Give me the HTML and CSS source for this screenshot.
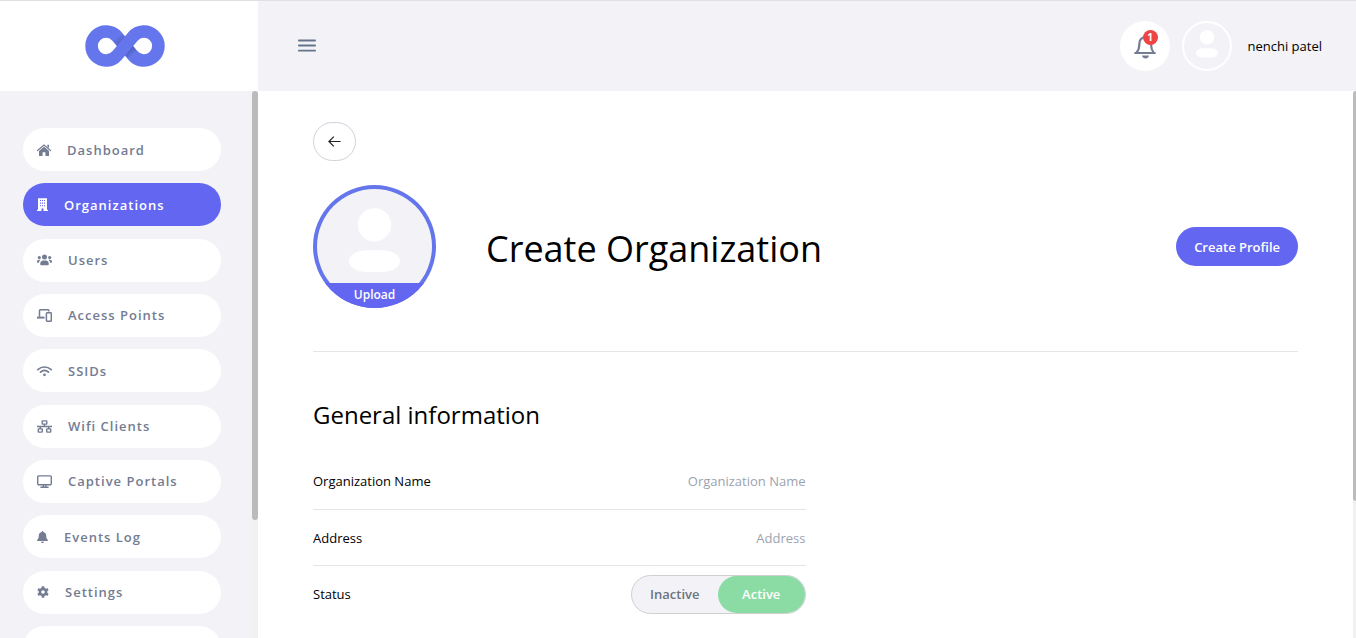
FILE: index.html
```html
<!DOCTYPE html>
<html lang="en">
<head>
<meta charset="utf-8">
<meta name="viewport" content="width=device-width, initial-scale=1">
<title>Create Organization</title>
<link rel="stylesheet" href="styles.css">
</head>
<body>
<div class="app">
  <aside class="sidebar">
    <a class="brand" href="#" aria-label="Home">
      <svg width="80" height="42" viewBox="0 0 80 42" fill="none" stroke="#6576ec" stroke-width="12.6">
        <defs>
          <linearGradient id="fold" gradientUnits="userSpaceOnUse" x1="32" y1="11.6" x2="48" y2="30.4">
            <stop offset="0" stop-color="#6576ec"/><stop offset=".3" stop-color="#5263c8"/><stop offset=".7" stop-color="#4c5cba"/><stop offset="1" stop-color="#6576ec"/>
          </linearGradient>
        </defs>
        <path d="M32.1 30.4A14.5 14.5 0 1 1 32.1 11.6"/>
        <path d="M47.9 11.6A14.5 14.5 0 1 1 47.9 30.4"/>
        <path d="M31.8 11.3L48.2 30.7" stroke="url(#fold)"/>
        <path d="M31.8 30.7L48.2 11.3"/>
      </svg>
    </a>
    <div class="side-body">
      <nav class="nav">
        <a class="nav-item" href="#">
          <svg width="14" height="12" viewBox="0 0 14 12" fill="currentColor"><path d="M7 2.8L12 7v4.4a.5.5 0 0 1-.5.5H8.4V8.3H5.6v3.6H2.5a.5.5 0 0 1-.5-.5V7z"/><path d="M.5 6.5L7 1.1l6.5 5.4" fill="none" stroke="currentColor" stroke-width="1.2" stroke-linecap="round"/><path d="M10.3.7h1.7V4l-1.7-1.4z"/></svg>
          Dashboard</a>
        <a class="nav-item active" href="#" aria-current="page">
          <svg width="11" height="13" viewBox="0 0 11 13" fill="currentColor"><path fill-rule="evenodd" d="M1 .3h9v11.5h1V13H6.5v-2.5h-2V13H0v-1.2h1zM3 2v1.100h1V2zm2 0v1.100h1V2zM7 2v1.100h1V2zM3 4.600v1.100h1V4.600zm2 0v1.100h1V4.600zm2 0v1.100h1V4.600zM3 7.200v1.100h1V7.200zm2 0v1.100h1V7.200zm2 0v1.100h1V7.200z"/></svg>
          Organizations</a>
        <a class="nav-item" href="#">
          <svg width="15" height="12" viewBox="0 0 15 12" fill="currentColor"><circle cx="7.5" cy="3" r="2.5"/><circle cx="2.3" cy="3.5" r="1.6"/><circle cx="12.7" cy="3.5" r="1.6"/><path d="M3.2 10c0-2.200 1.200-3.500 3-3.500h2.600c1.800 0 3 1.300 3 3.500 0 .8-.5 1.300-1.300 1.300h-6c-.8 0-1.300-.5-1.300-1.300zM0 7.700C0 6.400.7 5.700 1.900 5.700h1.500c-.9.8-1.400 1.900-1.500 3.100H1C.4 8.800 0 8.400 0 7.700zM15 7.700c0-1.300-.7-2-1.900-2h-1.500c.9.8 1.400 1.900 1.500 3.100h.9c.6 0 1-.4 1-1.100z"/></svg>
          Users</a>
        <a class="nav-item" href="#">
          <svg width="15" height="13" viewBox="0 0 15 13" fill="none" stroke="currentColor" stroke-width="1.500"><path d="M2.500 7.700V1.600a.8.800 0 0 1 .8-.8h7.800a.8.800 0 0 1 .8.800v.8"/><path d="M0 8.600h7.500" stroke-width="2"/><rect x="9.400" y="3.800" width="4.900" height="8.400" rx=".7"/></svg>
          Access Points</a>
        <a class="nav-item" href="#">
          <svg width="15" height="12" viewBox="0 0 15 12" fill="none" stroke="currentColor" stroke-width="1.600" stroke-linecap="round"><path d="M.8 4.700c4-3.600 9.400-3.600 13.400 0M3.500 7.200c2.400-2.200 5.600-2.200 8 0"/><circle cx="7.500" cy="9.800" r="1.400" fill="currentColor" stroke="none"/></svg>
          SSIDs</a>
        <a class="nav-item" href="#">
          <svg width="15" height="13" viewBox="0 0 15 13" fill="none" stroke="currentColor" stroke-width="1.400"><rect x="5.200" y=".9" width="4.600" height="3.200" rx=".5"/><rect x="1.300" y="8.900" width="4" height="3.200" rx=".5"/><rect x="9.700" y="8.900" width="4" height="3.200" rx=".5"/><path d="M0 6.500h15M7.500 4.100v2.400M3.300 6.500v2.400M11.700 6.500v2.400"/></svg>
          Wifi Clients</a>
        <a class="nav-item" href="#">
          <svg width="15" height="13" viewBox="0 0 15 13" fill="none" stroke="currentColor" stroke-width="1.400"><rect x=".7" y=".9" width="13.600" height="8.900" rx="1"/><path d="M6.300 10v1.800M8.700 10v1.800M3.400 12.300h8.200"/></svg>
          Captive Portals</a>
        <a class="nav-item" href="#">
          <svg width="11" height="12" viewBox="0 0 11 12" fill="currentColor"><path d="M4.800.4c0-.5 1.400-.5 1.400 0v.5c1.900.3 3 1.700 3 3.500 0 2.600.6 3.400 1.500 4.300.5.600.2 1.300-.5 1.300H.8c-.7 0-1-.7-.5-1.300.9-.9 1.500-1.700 1.500-4.300C1.800 2.600 2.900 1.200 4.800.9zM4 10.700h3c0 1.700-3 1.700-3 0z"/></svg>
          Events Log</a>
        <a class="nav-item" href="#">
          <svg width="12" height="12" viewBox="0 0 12 12"><g fill="none" stroke="currentColor"><circle cx="6" cy="6" r="3.100" stroke-width="2.600"/><path d="M6 .2v2M6 9.800v2M1 3.100l1.700 1M9.300 7.900l1.700 1M1 8.900l1.700-1M9.300 4.100l1.700-1" stroke-width="2.600"/></g></svg>
          Settings</a>
        <a class="nav-item" href="#" aria-label="More"></a>
      </nav>
      <div class="scroll-track" aria-hidden="true"><div class="scroll-thumb"></div></div>
    </div>
  </aside>

  <div class="page">
    <header class="topbar">
      <button class="menu" type="button" aria-label="Toggle menu">
        <svg width="18" height="14" viewBox="0 0 18 14" stroke="#64748b" stroke-width="1.800" stroke-linecap="round"><path d="M.9 1.500h16.200M.9 6.500h16.200M.9 11.700h16.200"/></svg>
      </button>
      <div class="account">
        <button class="bell" type="button" aria-label="Notifications">
          <svg width="24" height="28" viewBox="0 0 24 28" fill="none" stroke="#737c92" stroke-width="2.200"><path d="M2.200 21h19.600M3.600 20.400c2.100-2.300 2.700-4.600 2.700-8 0-4.300 2-7 5.900-7s5.900 2.700 5.900 7c0 3.400.5 5.700 2.300 8" stroke-linecap="round"/><path d="M9 23.600h7c-.6 4-6.400 4-7 0z" fill="#737c92" stroke="none"/></svg>
          <span class="badge">1</span>
        </button>
        <span class="user-pic">
          <svg width="22" height="28" viewBox="0 0 52 66" fill="#fff"><circle cx="26" cy="17" r="17"/><rect y="43" width="52" height="22" rx="16" ry="11"/></svg>
        </span>
        <span class="user-name">nenchi patel</span>
      </div>
    </header>

    <div class="page-body">
      <main class="content">
        <button class="back" type="button" aria-label="Back">
          <svg width="13" height="11" viewBox="0 0 13 11" fill="none" stroke="#222" stroke-width="1.200"><path d="M12.600 5.500H.9M5.800.6L.9 5.500l4.900 4.900"/></svg>
        </button>
        <section class="profile">
          <button class="avatar" type="button">
            <svg width="51" height="65" viewBox="0 0 52 66" fill="#fff"><circle cx="26" cy="17" r="17"/><rect y="43" width="52" height="22" rx="18" ry="11"/></svg>
            <span class="upload">Upload</span>
          </button>
          <h1 class="title">Create Organization</h1>
          <button class="primary" type="button">Create Profile</button>
        </section>
        <form class="columns">
          <section>
            <h2 class="subtitle">General information</h2>
            <div class="field">
              <label for="name">Organization Name</label>
              <input class="text" id="name" type="text" placeholder="Organization Name">
            </div>
            <div class="field">
              <label for="address">Address</label>
              <input class="text" id="address" type="text" placeholder="Address">
            </div>
            <div class="field last">
              <span id="status">Status</span>
              <div class="switch" role="radiogroup" aria-labelledby="status">
                <label class="option"><input type="radio" name="status">Inactive</label>
                <label class="option"><input type="radio" name="status" checked>Active</label>
              </div>
            </div>
          </section>
        </form>
      </main>
      <div class="scroll-track edge" aria-hidden="true"><div class="scroll-thumb"></div></div>
    </div>
  </div>
</div>
</body>
</html>
```

FILE: styles.css
```css
* { box-sizing: border-box; }

body {
  margin: 0;
  font-family: "Open Sans", "Noto Sans", sans-serif;
  font-size: 13px;
  line-height: 20px;
  color: #000;
  background: #fff;
}

button, input { font: inherit; color: inherit; border: 0; padding: 0; background: none; }
button { cursor: pointer; }
a { color: inherit; text-decoration: none; }
svg { display: block; flex: none; }

.app {
  display: flex;
  height: 100vh;
  overflow: hidden;
  border-top: 1px solid #e0e0e0;
}

.sidebar {
  display: flex;
  flex-direction: column;
  flex: 0 0 258px;
  background: #f3f2f7;
}

.brand {
  display: flex;
  flex: 0 0 90px;
  align-items: center;
  justify-content: center;
  padding-right: 8px;
  background: #fff;
}

.side-body, .page-body { display: flex; flex: 1; min-height: 0; overflow: hidden; }

.nav {
  display: flex;
  flex: 1;
  flex-direction: column;
  justify-content: space-between;
  height: 578px;
  padding: 37px 31px 0 23px;
}

.nav-item {
  display: flex;
  flex: 0 0 43px;
  align-items: center;
  gap: 16px;
  padding: 0 14px;
  border-radius: 22px;
  background: #fff;
  color: #737c92;
  font-weight: 600;
  letter-spacing: 1px;
}

.nav-item.active { background: #6366f1; color: #fff; }

.scroll-track { flex: 0 0 6px; background: #f1f1f1; }
.scroll-thumb { height: 78.500%; border-radius: 3px; background: #bbb; }
.scroll-track.edge { flex-basis: 3px; }
.edge .scroll-thumb { height: 75%; border-radius: 3px 0 0 3px; }

.page { display: flex; flex: 1; flex-direction: column; min-width: 0; }

.topbar {
  display: flex;
  flex: 0 0 90px;
  align-items: center;
  justify-content: space-between;
  padding: 0 34px 0 40px;
  background: #f3f2f7;
}

.account { display: flex; align-items: center; gap: 12px; }

.bell, .user-pic {
  display: grid;
  place-items: center;
  width: 50px;
  height: 50px;
  border-radius: 50%;
}

.bell { position: relative; background: #fff; }
.user-pic { border: 2px solid #fff; padding-bottom: 4px; }
.user-name { margin-left: 4px; font-weight: 500; }

.badge {
  position: absolute;
  top: 9px;
  right: 12px;
  width: 15px;
  height: 15px;
  border-radius: 50%;
  background: #ef4444;
  color: #fff;
  font-size: 10px;
  font-weight: 700;
  line-height: 15px;
}

.content { flex: 1; padding: 31px 55px 0; }

.back {
  display: grid;
  place-items: center;
  width: 43px;
  height: 39px;
  border: 1px solid #d1d1db;
  border-radius: 20px;
}

.profile {
  display: flex;
  align-items: center;
  padding: 24px 0 43px;
  border-bottom: 1px solid #e5e5e5;
}

.avatar {
  display: flex;
  flex-direction: column;
  align-items: center;
  justify-content: space-between;
  width: 123px;
  height: 123px;
  padding-top: 23px;
  border-radius: 50%;
  background: #f3f2f7;
  box-shadow: inset 0 0 0 4px #6576ec;
  overflow: hidden;
}

.upload {
  align-self: stretch;
  height: 25px;
  background: #6366f1;
  color: #fff;
  font-size: 12px;
  font-weight: 600;
  line-height: 24px;
}

.title { flex: 1; margin: 0; padding: 4px 0 0 50px; font-size: 36px; font-weight: 400; line-height: 48px; }

.primary {
  height: 39px;
  padding: 0 18px;
  border-radius: 20px;
  background: #6366f1;
  color: #fff;
  font-weight: 600;
}

.columns { display: grid; grid-template-columns: 1fr 1fr; padding-top: 47px; }
.subtitle { margin: 0 0 22px; font-size: 24px; font-weight: 400; line-height: 32px; }

.field {
  display: flex;
  align-items: center;
  justify-content: space-between;
  height: 56px;
  border-bottom: 1px solid #e5e5e5;
}

.field:first-of-type { height: 57px; }
.field.last { border: 0; }

.text { flex: 1; min-width: 0; text-align: right; outline: 0; }
.text::placeholder { color: #9ca3af; opacity: 1; font-weight: 500; }

.switch {
  display: flex;
  width: 175px;
  height: 39px;
  border: 1px solid #d0d0d0;
  border-radius: 20px;
  background: #f3f2f7;
}

.option {
  display: grid;
  flex: 1;
  place-items: center;
  border-radius: 20px;
  color: #6b7280;
  font-weight: 600;
  cursor: pointer;
}

.option input { position: absolute; opacity: 0; }
.option:has(input:checked) { background: #8adca4; color: #fff; }
```
